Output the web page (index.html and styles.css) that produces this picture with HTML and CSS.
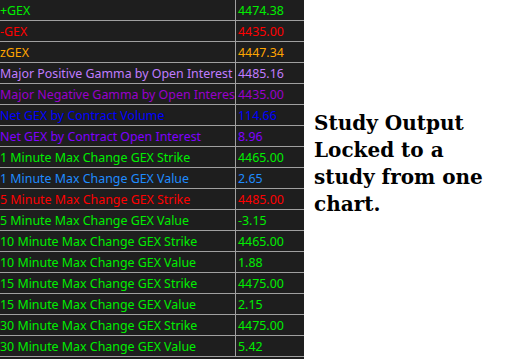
FILE: index.html
```html
<!DOCTYPE html>
<html>
<head>
<meta charset="utf-8">
<link rel="stylesheet" href="styles.css">
</head>
<body>
<div class="page">
  <div class="grid">
    <div class="row"><div class="name green">+GEX</div><div class="val green">4474.38</div></div>
    <div class="row"><div class="name red">-GEX</div><div class="val red">4435.00</div></div>
    <div class="row"><div class="name orange">zGEX</div><div class="val orange">4447.34</div></div>
    <div class="row"><div class="name lav">Major Positive Gamma by Open Interest</div><div class="val lav">4485.16</div></div>
    <div class="row"><div class="name plum">Major Negative Gamma by Open Interest</div><div class="val plum">4435.00</div></div>
    <div class="row"><div class="name blue">Net GEX by Contract Volume</div><div class="val blue">114.66</div></div>
    <div class="row"><div class="name violet">Net GEX by Contract Open Interest</div><div class="val violet">8.96</div></div>
    <div class="row"><div class="name green">1 Minute Max Change GEX Strike</div><div class="val green">4465.00</div></div>
    <div class="row"><div class="name sky">1 Minute Max Change GEX Value</div><div class="val sky">2.65</div></div>
    <div class="row"><div class="name red">5 Minute Max Change GEX Strike</div><div class="val red">4485.00</div></div>
    <div class="row"><div class="name green">5 Minute Max Change GEX Value</div><div class="val green">-3.15</div></div>
    <div class="row"><div class="name green">10 Minute Max Change GEX Strike</div><div class="val green">4465.00</div></div>
    <div class="row"><div class="name green">10 Minute Max Change GEX Value</div><div class="val green">1.88</div></div>
    <div class="row"><div class="name green">15 Minute Max Change GEX Strike</div><div class="val green">4475.00</div></div>
    <div class="row"><div class="name green">15 Minute Max Change GEX Value</div><div class="val green">2.15</div></div>
    <div class="row"><div class="name green">30 Minute Max Change GEX Strike</div><div class="val green">4475.00</div></div>
    <div class="row"><div class="name green">30 Minute Max Change GEX Value</div><div class="val green">5.42</div></div>
  </div>
  <div class="note">Study Output Locked to a study from one chart.</div>
</div>
</body>
</html>
```

FILE: styles.css
```css
html, body {
  margin: 0;
  padding: 0;
  background: #ffffff;
}
.page {
  display: flex;
  width: 524px;
  height: 359px;
  overflow: hidden;
}
.grid {
  width: 304px;
  height: 359px;
  background: #1e1e1e;
  flex: none;
  font-family: "Noto Sans", sans-serif;
  font-size: 12.4px;
}
.row {
  display: flex;
  height: 20px;
  border-bottom: 1px solid #a0a0a0;
}
.name {
  width: 235px;
  border-right: 1px solid #a0a0a0;
  white-space: nowrap;
  overflow: hidden;
  line-height: 21px;
  flex: none;
}
.val {
  padding-left: 2px;
  line-height: 21px;
  white-space: nowrap;
}
.green { color: #00ee00; }
.red { color: #ff0000; }
.orange { color: #ffa500; }
.lav { color: #c07cff; }
.plum { color: #9900cc; }
.blue { color: #0000ff; }
.violet { color: #8000ff; }
.sky { color: #1e8cff; }
.note {
  margin-left: 10px;
  margin-top: 110px;
  width: 180px;
  font-family: "DejaVu Serif", serif;
  font-weight: bold;
  font-size: 20px;
  line-height: 27px;
  color: #000;
}
```
